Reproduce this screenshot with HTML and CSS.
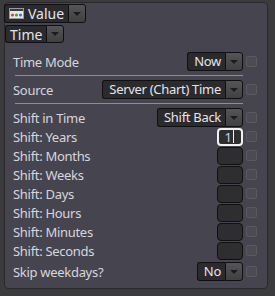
FILE: index.html
```html
<!DOCTYPE html>
<html lang="en">

<head>
    <meta charset="UTF-8">
    <meta name="viewport" content="width=device-width, initial-scale=1.0">
    <title>Time Value</title>
    <link rel="stylesheet" href="styles.css">
</head>

<body>
    <div class="panel">
        <div class="head">
            <div class="select value-select">
                <span class="box">
                    <svg class="icon" width="15" height="11" viewBox="0 0 15 11">
                        <rect x="0.5" y="0.5" width="14" height="10" fill="#e8e8e8" stroke="#9a9a9a"/>
                        <rect x="1" y="1" width="13" height="2" fill="#3a3a48"/>
                        <circle cx="3.5" cy="7" r="1.6" fill="#d04848"/>
                        <circle cx="7.5" cy="7" r="1.6" fill="#48a048"/>
                        <circle cx="11.5" cy="7" r="1.6" fill="#4870c8"/>
                    </svg>
                    Value
                </span>
                <span class="arrow"></span>
            </div>
            <div class="select time-select">
                <span class="box">Time</span>
                <span class="arrow"></span>
            </div>
        </div>

        <div class="rows">
            <div class="row">
                <span class="label">Time Mode</span>
                <div class="select"><span class="box">Now</span><span class="arrow"></span></div>
                <span class="check"></span>
            </div>
            <div class="sep"></div>
            <div class="row">
                <span class="label">Source</span>
                <div class="select"><span class="box">Server (Chart) Time</span><span class="arrow"></span></div>
                <span class="check"></span>
            </div>
            <div class="sep"></div>
            <div class="row">
                <span class="label">Shift in Time</span>
                <div class="select"><span class="box">Shift Back</span><span class="arrow"></span></div>
                <span class="check"></span>
            </div>
            <div class="row">
                <span class="label">Shift: Years</span>
                <span class="field focused">1<i class="caret"></i></span>
                <span class="check"></span>
            </div>
            <div class="row">
                <span class="label">Shift: Months</span>
                <span class="field"></span>
                <span class="check"></span>
            </div>
            <div class="row">
                <span class="label">Shift: Weeks</span>
                <span class="field"></span>
                <span class="check"></span>
            </div>
            <div class="row">
                <span class="label">Shift: Days</span>
                <span class="field"></span>
                <span class="check"></span>
            </div>
            <div class="row">
                <span class="label">Shift: Hours</span>
                <span class="field"></span>
                <span class="check"></span>
            </div>
            <div class="row">
                <span class="label">Shift: Minutes</span>
                <span class="field"></span>
                <span class="check"></span>
            </div>
            <div class="row">
                <span class="label">Shift: Seconds</span>
                <span class="field"></span>
                <span class="check"></span>
            </div>
            <div class="row last">
                <span class="label">Skip weekdays?</span>
                <div class="select"><span class="box">No</span><span class="arrow"></span></div>
                <span class="check"></span>
            </div>
        </div>
    </div>
</body>

</html>
```

FILE: styles.css
```css
:root {
    --bg: #3b3b3d;
    --panel: #46454f;
    --panel-border: #2a2a2e;
    --text: #d6d6de;
    --box: #2b2b2d;
    --edge: #101012;
}

body {
    margin: 0;
    background-color: var(--bg);
    font-family: "Noto Sans", "Open Sans", sans-serif;
    font-size: 12px;
    color: var(--text);
}

.panel {
    width: 264px;
    height: 287px;
    margin: 2px 0 0 4px;
    background-color: var(--panel);
    border: 1px solid var(--panel-border);
    border-radius: 4px;
    box-sizing: border-box;
}

.head {
    display: flex;
    flex-direction: column;
    align-items: flex-start;
    gap: 2px;
    margin: 1px 0 0 -1px;
}

.select {
    display: flex;
    height: 19px;
}

.select .box {
    display: flex;
    align-items: center;
    gap: 4px;
    padding: 0 4px 0 6px;
    background-color: var(--box);
    border: 1px solid var(--edge);
    border-right: none;
    border-radius: 3px 0 0 3px;
    color: #e4e4ec;
    font-size: 13px;
    letter-spacing: -0.3px;
    line-height: 17px;
}

.select .arrow {
    width: 18px;
    background: linear-gradient(#555557, #404042);
    border: 1px solid var(--edge);
    border-radius: 0 3px 3px 0;
    box-sizing: border-box;
    display: flex;
    align-items: center;
    justify-content: center;
}

.select .arrow::after {
    content: "";
    border-left: 4px solid transparent;
    border-right: 4px solid transparent;
    border-top: 4px solid #1c1c1e;
}

.value-select .box {
    font-size: 14px;
    letter-spacing: 0;
    padding-left: 4px;
}

.time-select {
    margin-left: 1px;
    height: 18px;
}

.time-select .box {
    font-size: 14px;
    letter-spacing: 0;
    padding: 0 4px;
}

.rows {
    display: flex;
    flex-direction: column;
    margin-top: 9px;
    padding: 0 10px 0 8px;
}

.row {
    display: flex;
    align-items: center;
    height: 19px;
}

.label {
    flex: 1;
    font-size: 13px;
    letter-spacing: -0.3px;
}

.check {
    width: 11px;
    height: 11px;
    margin-left: 3px;
    background-color: #4c4b54;
    border: 1px solid #5a5962;
    border-radius: 2px;
    box-sizing: border-box;
}

.sep {
    height: 1px;
    margin: 4px 14px 4px 2px;
    background-color: #8e8d94;
}

.field {
    width: 26px;
    height: 18px;
    background-color: #2e2e30;
    border: 1px solid var(--edge);
    border-radius: 4px;
    box-sizing: border-box;
    display: flex;
    align-items: center;
    justify-content: flex-end;
    padding-right: 8px;
    color: #c9d2f2;
    font-size: 13px;
}

.focused {
    border: 2px solid #f0f0f0;
    padding-right: 7px;
}

.caret {
    width: 1px;
    height: 13px;
    margin-left: 1px;
    background-color: #f0f0f0;
}

.last {
    margin-top: 2px;
}
```
